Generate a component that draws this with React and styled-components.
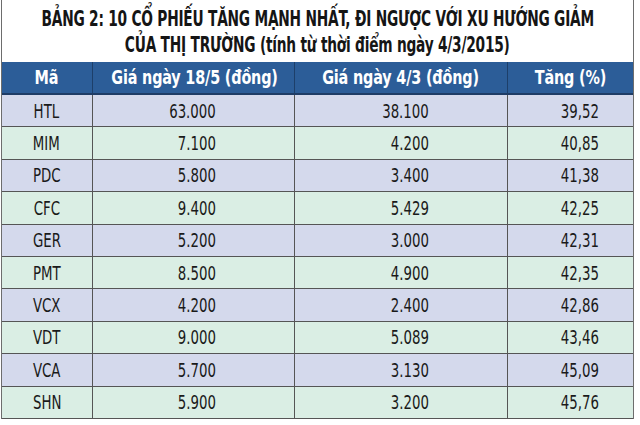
import styled, { createGlobalStyle } from 'styled-components'

const GlobalStyle = createGlobalStyle`
  body {
    margin: 0;
    background: #ffffff;
    font-family: "DejaVu Sans Condensed", "Liberation Sans", sans-serif;
  }
`

const rows = [
  ['HTL', '63.000', '38.100', '39,52'],
  ['MIM', '7.100', '4.200', '40,85'],
  ['PDC', '5.800', '3.400', '41,38'],
  ['CFC', '9.400', '5.429', '42,25'],
  ['GER', '5.200', '3.000', '42,31'],
  ['PMT', '8.500', '4.900', '42,35'],
  ['VCX', '4.200', '2.400', '42,86'],
  ['VDT', '9.000', '5.089', '43,46'],
  ['VCA', '5.700', '3.130', '45,09'],
  ['SHN', '5.900', '3.200', '45,76'],
]

const Frame = styled.div`
  margin-left: 1px;
  width: 633px;
  border-left: 1.5px solid #6d6d6d;
  border-right: 1.5px solid #6d6d6d;
  box-sizing: border-box;
`

const Title = styled.h1`
  margin: 0;
  height: 62px;
  padding-top: 6px;
  box-sizing: border-box;
  display: flex;
  flex-direction: column;
  align-items: center;
  font-size: 20.5px;
  line-height: 26px;
  font-weight: bold;
  color: #151515;
  letter-spacing: -0.3px;
`

// condensed lettering, like the printed table's narrow typeface
const Squeeze = styled.span`
  display: inline-block;
  white-space: nowrap;
  transform: scaleX(${p => p.$x || 0.8});
  transform-origin: ${p => p.$origin || 'center'};
`

const Table = styled.table`
  width: 100%;
  border-collapse: collapse;
  table-layout: fixed;
`

const HeadCell = styled.th`
  background: #2c5d98;
  color: #ffffff;
  height: 31px;
  padding: 0;
  font-size: 19.5px;
  font-weight: bold;
  text-align: center;
  border-left: 1.5px solid #1d3f6a;
  border-bottom: 2px solid #1e3c66;
  letter-spacing: -0.2px;
  &:first-child {
    border-left: none;
  }
`

const Row = styled.tr`
  background: ${p => (p.$odd ? '#daeee4' : '#d4d9ec')};
`

const Cell = styled.td`
  height: 31.4px;
  padding: 0 ${p => p.$pad || 0}px 0 0;
  font-size: 19px;
  color: #1a1a1a;
  text-align: ${p => (p.$pad ? 'right' : 'center')};
  border: 1.6px solid #555555;
  border-top: none;
  &:first-child {
    border-left: none;
  }
  &:last-child {
    border-right: none;
  }
`

function Num({ pad, children }) {
  return (
    <Cell $pad={pad}>
      <Squeeze $x={0.78} $origin="right">{children}</Squeeze>
    </Cell>
  )
}

export default function App() {
  return (
    <>
      <GlobalStyle />
      <Frame>
        <Title>
          <Squeeze $x={0.745}>
            BẢNG 2: 10 CỔ PHIẾU TĂNG MẠNH NHẤT, ĐI NGƯỢC VỚI XU HƯỚNG GIẢM
          </Squeeze>
          <Squeeze $x={0.745}>CỦA THỊ TRƯỜNG (tính từ thời điểm ngày 4/3/2015)</Squeeze>
        </Title>
        <Table>
          <colgroup>
            <col style={{ width: 90 }} />
            <col style={{ width: 202 }} />
            <col style={{ width: 213 }} />
            <col />
          </colgroup>
          <thead>
            <tr>
              <HeadCell><Squeeze $x={0.82}>Mã</Squeeze></HeadCell>
              <HeadCell><Squeeze $x={0.82}>Giá ngày 18/5 (đồng)</Squeeze></HeadCell>
              <HeadCell><Squeeze $x={0.82}>Giá ngày 4/3 (đồng)</Squeeze></HeadCell>
              <HeadCell><Squeeze $x={0.82}>Tăng (%)</Squeeze></HeadCell>
            </tr>
          </thead>
          <tbody>
            {rows.map((r, i) => (
              <Row key={r[0]} $odd={i % 2 === 1}>
                <Cell><Squeeze $x={0.78}>{r[0]}</Squeeze></Cell>
                <Num pad={78}>{r[1]}</Num>
                <Num pad={78}>{r[2]}</Num>
                <Num pad={34}>{r[3]}</Num>
              </Row>
            ))}
          </tbody>
        </Table>
      </Frame>
    </>
  )
}
